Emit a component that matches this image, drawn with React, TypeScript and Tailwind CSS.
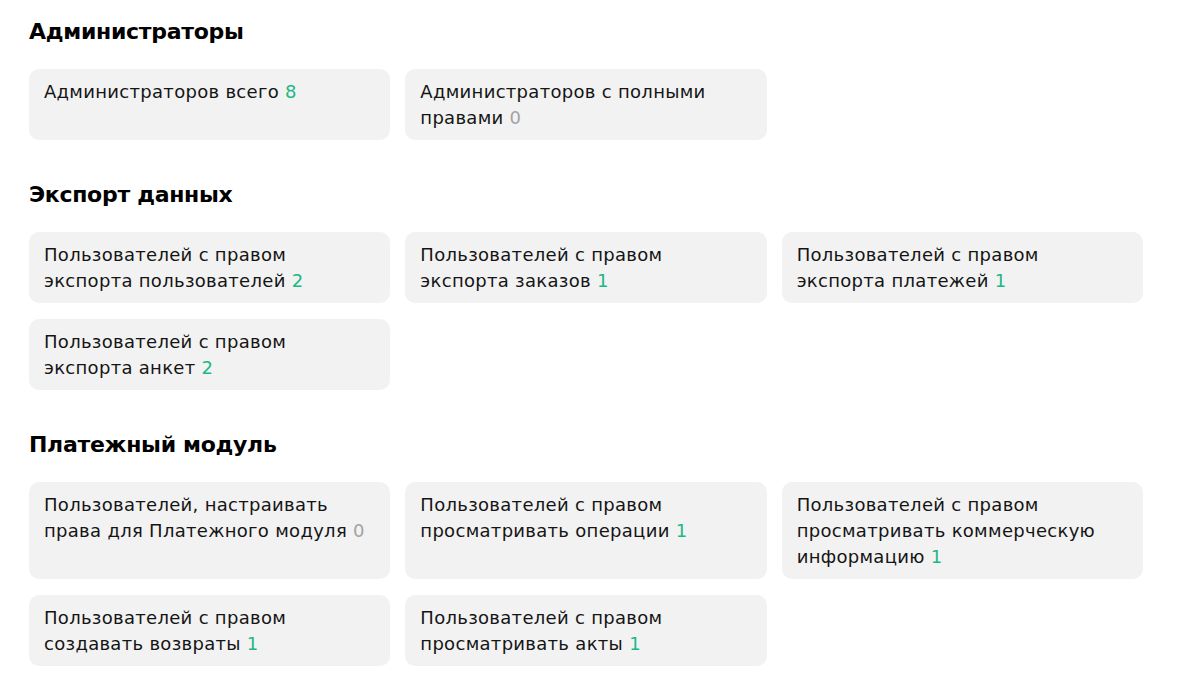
import React from "react";

type Item = { text: string; value: number };

const sections: { title: string; items: Item[] }[] = [
  {
    title: "Администраторы",
    items: [
      { text: "Администраторов всего", value: 8 },
      { text: "Администраторов с полными правами", value: 0 },
    ],
  },
  {
    title: "Экспорт данных",
    items: [
      { text: "Пользователей с правом экспорта пользователей", value: 2 },
      { text: "Пользователей с правом экспорта заказов", value: 1 },
      { text: "Пользователей с правом экспорта платежей", value: 1 },
      { text: "Пользователей с правом экспорта анкет", value: 2 },
    ],
  },
  {
    title: "Платежный модуль",
    items: [
      { text: "Пользователей, настраивать права для Платежного модуля", value: 0 },
      { text: "Пользователей с правом просматривать операции", value: 1 },
      { text: "Пользователей с правом просматривать коммерческую информацию", value: 1 },
      { text: "Пользователей с правом создавать возвраты", value: 1 },
      { text: "Пользователей с правом просматривать акты", value: 1 },
    ],
  },
];

export default function App() {
  return (
    <div
      className="min-h-screen bg-white pl-[29px] pt-[18px] text-[#151515]"
      style={{ fontFamily: '"DejaVu Sans", "Noto Sans", sans-serif' }}
    >
      <div className="w-[1114px]">
        {sections.map((s) => (
          <section key={s.title} className="mb-[41px]">
            <h2 className="mb-[23px] text-[22px] font-bold leading-[28px] tracking-[-0.3px] text-black">
              {s.title}
            </h2>
            <div className="grid grid-cols-3 gap-x-[15px] gap-y-[16px]">
              {s.items.map((it) => (
                <div
                  key={it.text}
                  className="rounded-[10px] bg-[#f2f2f2] pl-[15px] pr-[15px] pt-[10px] pb-[9px] text-[18px] leading-[26px] tracking-[0.3px]"
                >
                  <p className="max-w-[326px]">
                    {it.text}
                    {"\u00a0"}
                    <span className={it.value === 0 ? "text-[#a3a3a3]" : "text-[#1cb884]"}>
                      {it.value}
                    </span>
                  </p>
                </div>
              ))}
            </div>
          </section>
        ))}
      </div>
    </div>
  );
}
